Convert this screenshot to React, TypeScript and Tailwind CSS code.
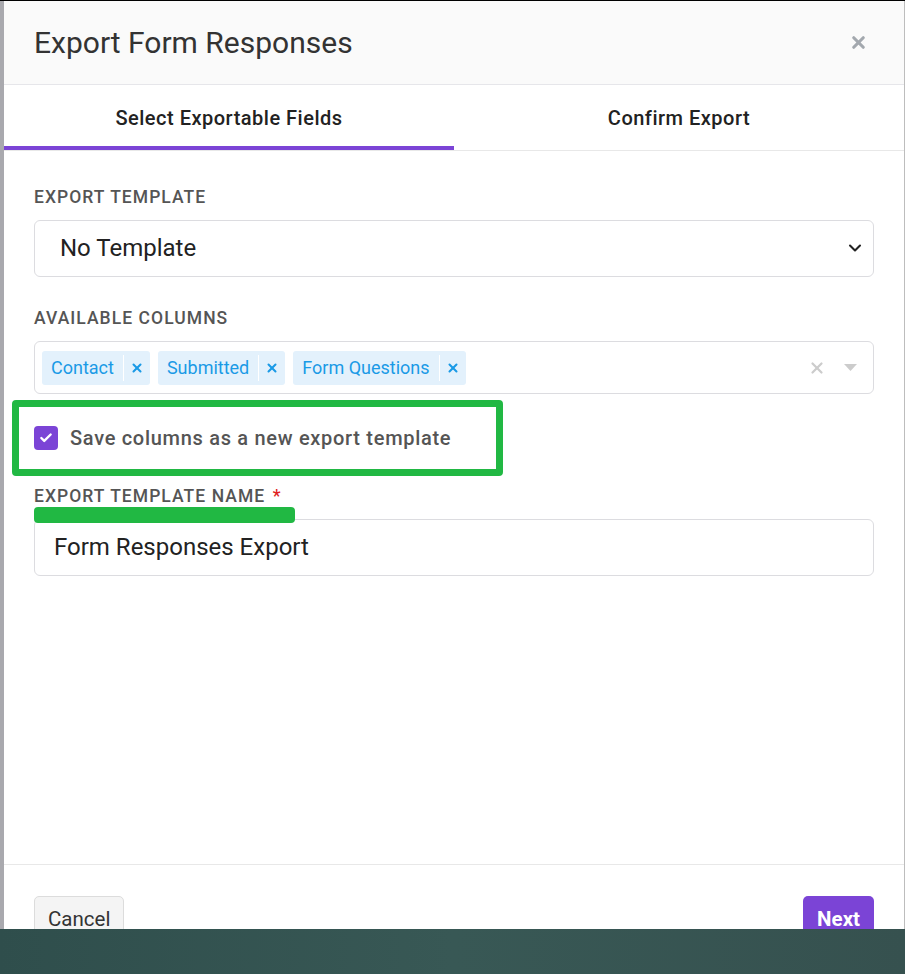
import { Check, ChevronDown, X } from 'lucide-react';

const font = { fontFamily: 'Roboto, "Noto Sans", sans-serif' };

function Tag({ label }: { label: string }) {
  return (
    <div className="flex h-[34px] items-center rounded-[3px] bg-[#e3f1fc] text-[#1a9ae6]">
      <span className="px-[9px] text-[18px] leading-none">{label}</span>
      <span className="h-[26px] w-px bg-white" />
      <span className="flex w-[26px] items-center justify-center">
        <X size={14} strokeWidth={3.5} />
      </span>
    </div>
  );
}

function FieldLabel({ children }: { children: React.ReactNode }) {
  return (
    <div className="text-[17.5px] font-medium uppercase leading-none tracking-[0.06em] text-[#555]">
      {children}
    </div>
  );
}

export default function App() {
  return (
    <div className="relative h-[974px] w-[905px] overflow-hidden bg-[#a9a9ae]" style={font}>
      <div className="flex h-full flex-col border-t border-black pl-[4px]">
        <div className="flex h-full flex-col border-r border-[#bdbdbd] bg-white">
          {/* header */}
          <div className="flex h-[84px] items-center justify-between border-b border-[#e6e6ea] bg-[#fafafa] pl-[30px] pr-[36px]">
            <h1 className="text-[30px] leading-none text-[#333]">Export Form Responses</h1>
            <X size={19} strokeWidth={4} className="text-[#a3a8ae]" />
          </div>

          {/* tabs */}
          <div className="flex h-[66px] border-b border-[#e8e8e8]">
            <div className="flex flex-1 items-center justify-center border-b-[4px] border-[#7b44d6] pt-[4px] text-[20px] font-medium tracking-[0.025em] text-[#222]">
              Select Exportable Fields
            </div>
            <div className="flex flex-1 items-center justify-center text-[20px] font-medium tracking-[0.025em] text-[#222]">
              Confirm Export
            </div>
          </div>

          {/* body */}
          <div className="flex flex-1 flex-col px-[30px] pt-[38px]">
            <FieldLabel>Export Template</FieldLabel>
            <div className="mt-[13px] flex h-[57px] items-center justify-between rounded-[6px] border border-[#dcdce0] pl-[25px] pr-[6px]">
              <span className="text-[24px] text-[#222]">No Template</span>
              <ChevronDown size={20} strokeWidth={2.5} className="mr-[2px] text-[#222]" />
            </div>

            <div className="mt-[33px]">
              <FieldLabel>Available Columns</FieldLabel>
            </div>
            <div className="mt-[14px] flex h-[53px] items-center justify-between rounded-[6px] border border-[#dcdce0] pl-[7px] pr-[16px]">
              <div className="flex gap-[8px]">
                <Tag label="Contact" />
                <Tag label="Submitted" />
                <Tag label="Form Questions" />
              </div>
              <div className="flex items-center gap-[18px] text-[#cccccc]">
                <X size={18} strokeWidth={3} />
                <svg width="13" height="8" viewBox="0 0 13 8">
                  <path d="M0 0h13L6.5 7z" fill="#cccccc" />
                </svg>
              </div>
            </div>

            <div className="ml-[-22px] mt-[6px] flex h-[76px] w-[491px] items-center rounded-[4px] border-[7px] border-[#21b843] pl-[15px]">
              <div className="flex h-[24px] w-[24px] items-center justify-center rounded-[4px] bg-[#7b44d6]">
                <Check size={14} strokeWidth={4} className="text-white" />
              </div>
              <span className="ml-[12px] text-[20px] font-medium tracking-[0.035em] text-[#555]">
                Save columns as a new export template
              </span>
            </div>

            <div className="mt-[12px]">
              <FieldLabel>
                Export Template Name <span className="ml-[2px] text-[#e02020]">*</span>
              </FieldLabel>
            </div>
            <div className="relative mt-[1px]">
              <div className="absolute left-0 top-0 h-[16px] w-[261px] rounded-[4px] bg-[#21b843]" />
              <div className="mt-[12px] flex h-[57px] items-center rounded-[6px] border border-[#dcdce0] pl-[19px]">
                <span className="text-[24px] text-[#222]">Form Responses Export</span>
              </div>
            </div>
          </div>

          {/* footer */}
          <div className="flex h-[110px] items-start justify-between border-t border-[#e8e8e8] px-[30px] pt-[31px]">
            <button className="h-[46px] rounded-[5px] border border-[#dcdcdc] bg-[#f4f4f4] px-[13px] text-[20.5px] text-[#333]">
              Cancel
            </button>
            <button className="h-[46px] rounded-[5px] bg-[#7b44d6] px-[14px] text-[20.5px] font-bold text-white">
              Next
            </button>
          </div>
        </div>
      </div>

      {/* desktop strip over the bottom */}
      <div className="absolute bottom-0 left-0 h-[45px] w-full bg-gradient-to-r from-[#2f4e4c] via-[#385855] to-[#36514f]" />
    </div>
  );
}
